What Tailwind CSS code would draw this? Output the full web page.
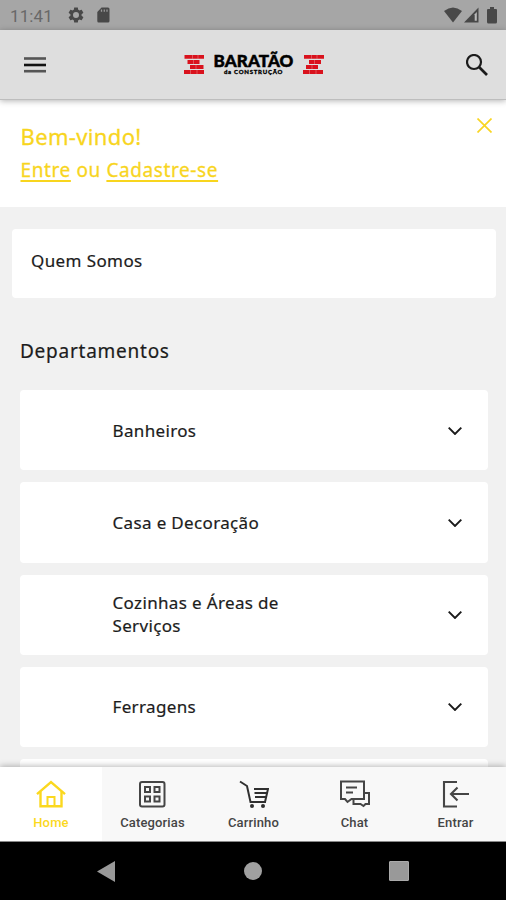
<!DOCTYPE html>
<html lang="pt-BR">
<head>
<meta charset="utf-8">
<title>Baratão da Construção</title>
<script src="https://cdn.jsdelivr.net/npm/@tailwindcss/browser@4"></script>
</head>
<body class="w-[506px] h-[900px] overflow-hidden flex flex-col bg-[#f1f1f1] text-[#1c1c1c] font-['Noto_Sans',sans-serif]">
<div class="h-[30px] shrink-0 bg-[#a6a6a6] flex items-center justify-between text-[#484848]">
  <div class="flex items-center pl-[10px]">
    <span class="w-[57px] font-[Roboto,sans-serif] text-[17px] leading-5 tracking-[0.1px] text-[#686868] pt-[1px]">11:41</span>
    <svg class="w-[18px] h-[18px]" viewBox="0 0 24 24" fill="currentColor"><path fill-rule="evenodd" d="M19.4 13a7.500 7.500 0 0 0 0-2l2.200-1.700c.2-.2.300-.4.100-.6l-2-3.500c-.1-.2-.4-.3-.6-.2l-2.500 1a7.300 7.300 0 0 0-1.700-1L14.500 2.400c0-.2-.2-.4-.5-.4h-4c-.3 0-.5.2-.5.4L9.100 5a7.300 7.300 0 0 0-1.700 1l-2.500-1c-.2-.1-.5 0-.6.200l-2 3.500c-.1.200-.1.400.1.600L4.600 11a7.500 7.500 0 0 0 0 2l-2.200 1.700c-.2.200-.2.400-.1.600l2 3.500c.1.200.4.300.6.200l2.500-1a7.300 7.300 0 0 0 1.700 1l.4 2.600c0 .2.200.4.500.4h4c.3 0 .5-.2.500-.4l.4-2.600a7.300 7.300 0 0 0 1.700-1l2.500 1c.2.100.5 0 .6-.2l2-3.500c.1-.2.100-.4-.1-.6zM12 16a4 4 0 1 1 0-8 4 4 0 0 1 0 8z"/></svg>
    <svg class="w-[13px] h-[16px] ml-[12px]" viewBox="0 0 13 16"><path d="M4.500.5H11q1.500 0 1.500 1.500v12q0 1.500-1.500 1.500H1.500Q.3 15.500.3 14V5z" fill="currentColor"/><path d="M4.500 2.500v2.300M7.300 2.500v2.300M10 2.500v2.300" stroke="#999" stroke-width="1.300"/></svg>
  </div>
  <div class="flex items-center pr-[9px]">
    <svg class="w-[18px] h-[16px]" viewBox="0 0 18 16" fill="currentColor"><path d="M0 4Q9-3 18 4L9 15.500z"/></svg>
    <svg class="w-[15px] h-[16px] ml-[2px]" viewBox="0 0 15 16"><path d="M0 15.500L14.500.5v15z" fill="currentColor"/><path d="M10.700 7.200L12.800 5v8.800h-2.100z" fill="#bbb"/></svg>
    <svg class="w-[10px] h-[17px] ml-[8px]" viewBox="0 0 10 17" fill="currentColor"><path d="M3 0h4v2h2q1 0 1 1v12q0 1.500-1.500 1.500h-7Q0 16.500 0 15V3q0-1 1-1h2z"/></svg>
  </div>
</div>
<header class="h-[70px] shrink-0 bg-[#dedede] border-b border-[#bdbdbd] shadow-[0_1px_6px_rgba(0,0,0,.3)] z-10 flex items-center justify-between pl-[24px] pr-[18px]">
  <svg class="w-[22px] h-[18px]" viewBox="0 0 22 18" stroke-width="2.600"><path d="M0 2.500h22" stroke="#555"/><path d="M0 9h22" stroke="#111"/><path d="M0 15.200h22" stroke="#555"/></svg>
  <div class="flex items-center pr-[5px]">
    <svg class="w-[21px] h-[19px]" viewBox="0 0 21 19"><path d="M.5 0h19.500v3.800H.5zM3.500 5h12v4H3.500zM6 10h13.500v4H6zM0 15h20v4H0z" fill="#d9121d"/><path d="M8.500 0v3.800M14 0v3.800M9.500 5v4M12 10v4M6.500 15v4M13 15v4" stroke="#edb3b3" stroke-width=".4"/></svg>
    <div class="w-[98px] flex flex-col items-center text-black font-[Lato,sans-serif] font-black">
      <span class="text-[17px] leading-[14px] tracking-[0.1px] whitespace-nowrap [-webkit-text-stroke:0.5px_black]">BARATÃO</span>
      <span class="mt-px text-[6px] leading-[6px] tracking-[0.75px] whitespace-nowrap [-webkit-text-stroke:0.3px_black]">da CONSTRUÇÃO</span>
    </div>
    <svg class="w-[21px] h-[19px]" viewBox="0 0 21 19"><path d="M1 0h20v3.800H1zM6 5h12v4H6zM3 10h12v4H3zM0 15h20v4H0z" fill="#d9121d"/><path d="M8.500 0v3.800M14 0v3.800M11.500 5v4M9 10v4M6.500 15v4M13 15v4" stroke="#edb3b3" stroke-width=".4"/></svg>
  </div>
  <svg class="w-[22px] h-[22px]" viewBox="0 0 22 22" fill="none" stroke="#1b1b1b"><circle cx="8" cy="8" r="7" stroke-width="2.200"/><path d="M13 13l8 8" stroke-width="2.600"/></svg>
</header>
<section class="h-[107px] shrink-0 bg-white flex justify-between pl-[20.500px] pr-[14px] text-[#f8d51e]">
  <div class="pt-[20px]">
    <h1 class="text-[22px] leading-[32px] tracking-[0.35px] [-webkit-text-stroke:0.3px_#f8d51e]">Bem-vindo!</h1>
    <p class="mt-px text-[19px] leading-[34px] tracking-[0.6px] [-webkit-text-stroke:0.3px_#f8d51e]"><a class="underline decoration-[1.500px] underline-offset-[3px]">Entre</a> ou <a class="underline decoration-[1.500px] underline-offset-[3px]">Cadastre-se</a></p>
  </div>
  <svg class="w-[15px] h-[15px] mt-[18px]" viewBox="0 0 15 15" stroke="#f9d523" stroke-width="1.700"><path d="M.5.5l14 14M14.500.5l-14 14"/></svg>
</section>
<main class="h-[560px] shrink-0 overflow-hidden pt-[22px] [-webkit-text-stroke:0.2px_#1c1c1c]">
  <div class="ml-[12px] w-[484px] h-[69px] rounded-[4px] bg-white flex items-center pl-[19px] pb-[5px] text-[17px] tracking-[0.4px]">Quem Somos</div>
  <h2 class="mt-[37px] pl-[20px] h-[32px] text-[19px] leading-[32px] tracking-[0.75px]">Departamentos</h2>
  <div class="mt-[23px] ml-[20px] w-[468px] flex flex-col gap-[12px] text-[17px] leading-[23px] tracking-[0.35px]">
    <div class="h-[80.300px] shrink-0 rounded-[4px] bg-white flex items-center justify-between pl-[92.500px] pr-[26px]"><span>Banheiros</span><svg class="w-[14px] h-[8px] mt-px" viewBox="0 0 14 8" fill="none" stroke="#1a1a1a" stroke-width="1.900"><path d="M.7.7L7 7 13.300.7"/></svg></div>
    <div class="h-[80.300px] shrink-0 rounded-[4px] bg-white flex items-center justify-between pl-[92.500px] pr-[26px]"><span>Casa e Decoração</span><svg class="w-[14px] h-[8px] mt-px" viewBox="0 0 14 8" fill="none" stroke="#1a1a1a" stroke-width="1.900"><path d="M.7.7L7 7 13.300.7"/></svg></div>
    <div class="h-[80.300px] shrink-0 rounded-[4px] bg-white flex items-center justify-between pl-[92.500px] pr-[26px]"><span class="-mt-px">Cozinhas e Áreas de<br>Serviços</span><svg class="w-[14px] h-[8px]" viewBox="0 0 14 8" fill="none" stroke="#1a1a1a" stroke-width="1.900"><path d="M.7.7L7 7 13.300.7"/></svg></div>
    <div class="h-[80.300px] shrink-0 rounded-[4px] bg-white flex items-center justify-between pl-[92.500px] pr-[26px]"><span class="-mt-px">Ferragens</span><svg class="w-[14px] h-[8px]" viewBox="0 0 14 8" fill="none" stroke="#1a1a1a" stroke-width="1.900"><path d="M.7.7L7 7 13.300.7"/></svg></div>
    <div class="h-[80px] shrink-0 rounded-[4px] bg-white"></div>
  </div>
</main>
<nav class="h-[75px] shrink-0 bg-[#f8f8f8] border-b border-[#888] shadow-[0_-1px_6px_rgba(0,0,0,.28)] z-10 flex text-[#454545] font-[Roboto,sans-serif] font-medium text-[13px] leading-[16px] tracking-[0.15px]">
  <a class="w-[102px] bg-white text-[#fbd81e] flex flex-col items-center pt-[13px] gap-[7px]">
    <svg class="w-[30px] h-[28px]" viewBox="0 0 30 28" fill="none" stroke="currentColor" stroke-width="2"><path d="M1 14.200L15 2l14 12.200" stroke-width="2.400"/><path d="M4.500 11.500v14.700h21V11.500" stroke-width="2.400"/><path d="M11.500 26v-9h7v9"/></svg>Home</a>
  <a class="w-[101px] flex flex-col items-center pt-[13px] gap-[7px]">
    <svg class="w-[28px] h-[28px] -ml-px" viewBox="0 0 28 28" fill="none" stroke="currentColor" stroke-width="2"><rect x="2" y="2" width="24.500" height="24.500" rx="2"/><path d="M7 7h5v5H7zM16.500 7h5v5h-5zM7 16.500h5v5H7zM16.500 16.500h5v5h-5z"/></svg>Categorias</a>
  <a class="w-[101px] flex flex-col items-center pt-[13px] gap-[7px]">
    <svg class="w-[30px] h-[28px]" viewBox="0 0 30 28" fill="none" stroke="#303030" stroke-width="2"><path d="M1 1.500L8 6l3.500 16H27M15 9h14l-3 13M15.500 13h12M16 17h10.500"/><g fill="#303030" stroke="none"><circle cx="13" cy="26" r="2"/><circle cx="24" cy="26" r="2"/></g></svg>Carrinho</a>
  <a class="w-[101px] flex flex-col items-center pt-[13px] gap-[7px]">
    <svg class="w-[30px] h-[28px]" viewBox="0 0 30 28" fill="none" stroke="currentColor" stroke-width="2"><path d="M1 1.500h23v17.500H11.500l-4 3-2.500-3H1zM6 7.500h11M6 12.500h7"/><path d="M24 13h5v11h-3.500l-2 2-3-2h-7v-4.500"/></svg>Chat</a>
  <a class="w-[101px] flex flex-col items-center pt-[13px] gap-[7px]">
    <svg class="w-[28px] h-[28px]" viewBox="0 0 28 28" fill="none" stroke="currentColor" stroke-width="2.100"><path d="M15 2H2v24.500h13M27 14H9M15.500 7.500L9 14l6.500 6.500"/></svg>Entrar</a>
</nav>
<footer class="h-[58px] shrink-0 bg-black flex items-center justify-between pl-[97px] pr-[97px]">
  <svg class="w-[18px] h-[21px]" viewBox="0 0 18 21"><path d="M18 0v21L0 10.500z" fill="#999"/></svg>
  <div class="w-[18px] h-[18px] ml-[2px] rounded-full bg-[#a0a0a0]"></div>
  <div class="w-[20px] h-[20px] rounded-[1px] bg-[#999] border border-[#aaa]"></div>
</footer>
</body>
</html>
